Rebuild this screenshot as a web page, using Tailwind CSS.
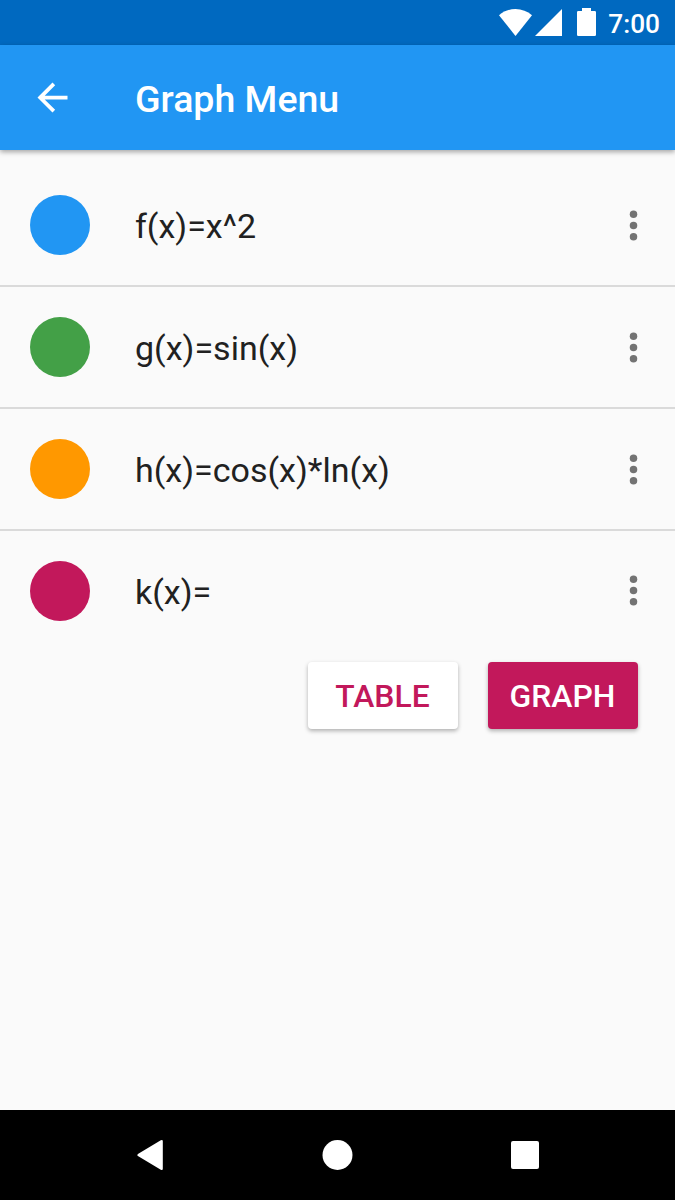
<!DOCTYPE html>
<html lang="en">
<head>
    <meta charset="UTF-8">
    <meta name="viewport" content="width=device-width, initial-scale=1.0">
    <title>Graph Menu</title>
    <script src="https://cdn.jsdelivr.net/npm/@tailwindcss/browser@4"></script>
</head>
<body class="bg-[#fafafa] font-['Roboto',sans-serif]">
<div class="flex flex-col w-full h-[1200px] overflow-hidden">

    <!-- Status Bar -->
    <div class="h-[45px] shrink-0 bg-[#0069c0] flex items-center justify-end pr-[15px] text-white">
        <svg class="w-[33px] h-[27px]" viewBox="0 0 33 27" fill="currentColor"><path d="M16.5 27 0 6.2C4.6 2.3 10.3 0 16.5 0S28.400 2.300 33 6.200z"/></svg>
        <svg class="w-[27px] h-[27px] ml-[3px]" viewBox="0 0 27 27" fill="currentColor"><path d="M27 0v27H0z"/></svg>
        <svg class="w-[19px] h-[28px] ml-[15px] -mt-px" viewBox="0 0 19 28" fill="currentColor"><path d="M5 0h9v3h3.700q1.300 0 1.300 1.300V26.700q0 1.300-1.300 1.300H1.300Q0 28 0 26.700V4.300Q0 3 1.300 3H5z"/></svg>
        <span class="ml-3 text-[26.25px] leading-none font-medium pt-[3px]">7:00</span>
    </div>

    <!-- App Bar -->
    <header class="relative h-[105px] shrink-0 bg-[#2196f3] flex items-center pl-[30px] text-white shadow-[0_2px_5px_rgba(0,0,0,0.35)]">
        <button class="w-[45px] h-[45px]" aria-label="Back">
            <svg class="w-[45px] h-[45px]" viewBox="0 0 24 24" fill="currentColor"><path d="M20 11H7.830l5.590-5.590L12 4l-8 8 8 8 1.410-1.410L7.830 13H20v-2z"/></svg>
        </button>
        <h1 class="ml-[60px] text-[37.5px] leading-none font-medium pt-1">Graph Menu</h1>
    </header>

    <!-- Function List -->
    <ul class="pt-[15px] text-[34px] text-[#212121]">
        <li class="h-[122px] flex items-center pl-[30px] pr-[19px] border-b-2 border-[#dadada]">
            <span class="w-[60px] h-[60px] rounded-full bg-[#2196f3]"></span>
            <span class="ml-[45px] flex-1 leading-none pt-0.5">f(x)=x^2</span>
            <svg class="w-[45px] h-[45px] text-[#737373]" viewBox="0 0 24 24" fill="currentColor"><circle cx="12" cy="6" r="2"/><circle cx="12" cy="12" r="2"/><circle cx="12" cy="18" r="2"/></svg>
        </li>
        <li class="h-[122px] flex items-center pl-[30px] pr-[19px] border-b-2 border-[#dadada]">
            <span class="w-[60px] h-[60px] rounded-full bg-[#43a047]"></span>
            <span class="ml-[45px] flex-1 leading-none pt-0.5">g(x)=sin(x)</span>
            <svg class="w-[45px] h-[45px] text-[#737373]" viewBox="0 0 24 24" fill="currentColor"><circle cx="12" cy="6" r="2"/><circle cx="12" cy="12" r="2"/><circle cx="12" cy="18" r="2"/></svg>
        </li>
        <li class="h-[122px] flex items-center pl-[30px] pr-[19px] border-b-2 border-[#dadada]">
            <span class="w-[60px] h-[60px] rounded-full bg-[#ff9800]"></span>
            <span class="ml-[45px] flex-1 leading-none pt-0.5">h(x)=cos(x)*ln(x)</span>
            <svg class="w-[45px] h-[45px] text-[#737373]" viewBox="0 0 24 24" fill="currentColor"><circle cx="12" cy="6" r="2"/><circle cx="12" cy="12" r="2"/><circle cx="12" cy="18" r="2"/></svg>
        </li>
        <li class="h-[119px] flex items-center pl-[30px] pr-[19px]">
            <span class="w-[60px] h-[60px] rounded-full bg-[#c2185b]"></span>
            <span class="ml-[45px] flex-1 leading-none pt-0.5">k(x)=</span>
            <svg class="w-[45px] h-[45px] text-[#737373]" viewBox="0 0 24 24" fill="currentColor"><circle cx="12" cy="6" r="2"/><circle cx="12" cy="12" r="2"/><circle cx="12" cy="18" r="2"/></svg>
        </li>
    </ul>

    <!-- Actions -->
    <div class="mt-[12px] pr-[37.5px] flex justify-end gap-[30px] text-[31.875px] font-medium">
        <button class="w-[150px] h-[67px] rounded-[4px] bg-white text-[#c2185b] pt-[3px] shadow-[0_2px_4px_rgba(0,0,0,0.3)]">TABLE</button>
        <button class="w-[150px] h-[67px] rounded-[4px] bg-[#c2185b] text-white pt-[3px] shadow-[0_2px_4px_rgba(0,0,0,0.3)]">GRAPH</button>
    </div>

    <!-- Navigation Bar -->
    <nav class="mt-auto h-[90px] shrink-0 bg-black text-white flex items-center justify-center gap-[142.5px]">
        <svg class="w-[45px] h-[45px]" viewBox="0 0 45 45" fill="currentColor"><path d="M10.300 20.700 32.800 7.300q2-1 2 1V35.700q0 2-2 1L10.300 23.300q-2-1.300 0-2.600z"/></svg>
        <svg class="w-[45px] h-[45px]" viewBox="0 0 45 45" fill="currentColor"><circle cx="22.500" cy="22" r="15"/></svg>
        <svg class="w-[45px] h-[45px]" viewBox="0 0 45 45" fill="currentColor"><rect x="8" y="8" width="28" height="28" rx="2"/></svg>
    </nav>

</div>
</body>
</html>
